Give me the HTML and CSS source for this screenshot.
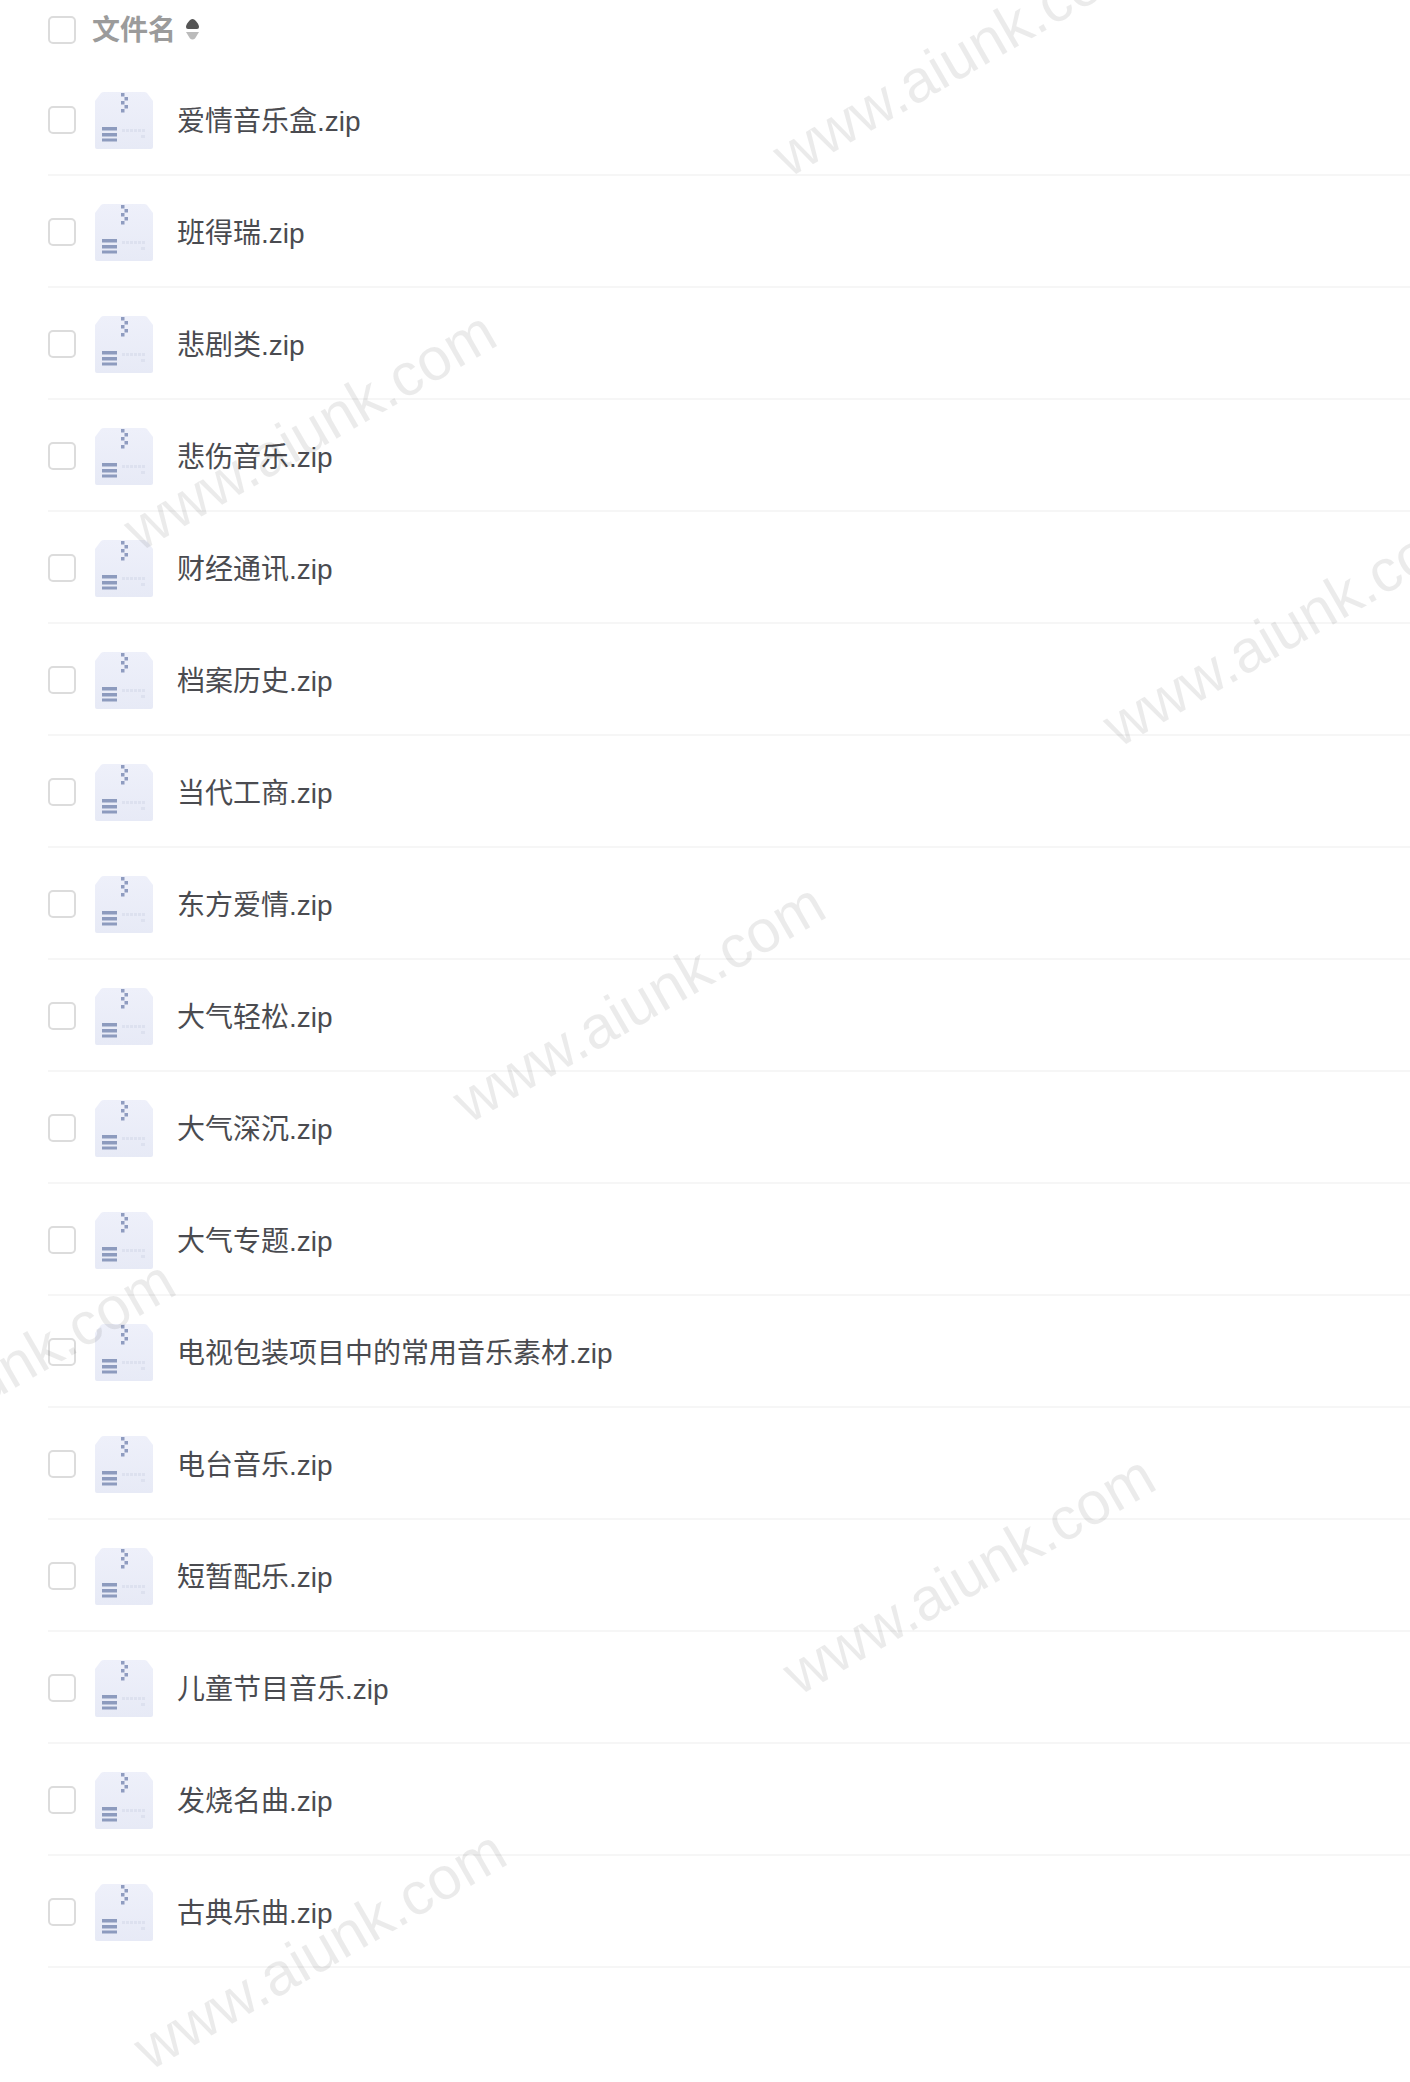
FILE: index.html
```html
<!DOCTYPE html>
<html lang="zh-CN">
<head>
    <meta charset="UTF-8">
    <title>文件列表</title>
    <link rel="stylesheet" href="styles.css">
</head>
<body>

<svg class="defs" width="0" height="0">
    <defs>
        <linearGradient id="zipfill" x1="0" y1="0" x2="0" y2="1">
            <stop offset="0" stop-color="#eef0fa"/>
            <stop offset="1" stop-color="#e7eaf6"/>
        </linearGradient>
    </defs>
    <symbol id="zip" viewBox="0 0 58 57">
        <path d="M0 9 L6 1 Q7 0 9 0 H49 Q51 0 52 1 L58 9 V55 Q58 57 56 57 H2 Q0 57 0 55 Z" fill="url(#zipfill)"/>
        <path d="M26 1h3.500v3.500h-3.500zM29.500 5h3.500v3.500h-3.500zM26 9h3.500v3.500h-3.500zM29.500 13h3.500v3.500h-3.500zM26 17h3.500v3.500h-3.500z" fill="#8f9cc0"/>
        <path d="M7 35h15v3.500h-15zM7 41h15v3.500h-15zM7 46.500h15v3h-15z" fill="#8d9bbe"/>
        <path d="M27 37h3v3h-3zM31 37h3v3h-3zM35 37h3v3h-3zM39 37h3v3h-3zM43 37h3v3h-3zM47 37h3v3h-3zM46 43h4v3h-4z" fill="#dde1ef"/>
    </symbol>
</svg>

<div class="list-head">
    <span class="check"></span>
    <span class="head-name">文件名</span>
    <svg class="sort" width="13" height="21" viewBox="0 0 13 21">
        <path d="M6.500 0 C9 0 13 5 13 8 Q13 10 11 10 H2 Q0 10 0 8 C0 5 4 0 6.500 0 Z" fill="#555"/>
        <path d="M0 13 H13 L9 19.500 Q6.500 21.500 4 19.500 Z" fill="#bbb"/>
    </svg>
</div>

<ul class="file-list">
    <li class="file"><span class="check"></span><svg class="zip"><use href="#zip"/></svg><span class="name">爱情音乐盒.zip</span></li>
    <li class="file"><span class="check"></span><svg class="zip"><use href="#zip"/></svg><span class="name">班得瑞.zip</span></li>
    <li class="file"><span class="check"></span><svg class="zip"><use href="#zip"/></svg><span class="name">悲剧类.zip</span></li>
    <li class="file"><span class="check"></span><svg class="zip"><use href="#zip"/></svg><span class="name">悲伤音乐.zip</span></li>
    <li class="file"><span class="check"></span><svg class="zip"><use href="#zip"/></svg><span class="name">财经通讯.zip</span></li>
    <li class="file"><span class="check"></span><svg class="zip"><use href="#zip"/></svg><span class="name">档案历史.zip</span></li>
    <li class="file"><span class="check"></span><svg class="zip"><use href="#zip"/></svg><span class="name">当代工商.zip</span></li>
    <li class="file"><span class="check"></span><svg class="zip"><use href="#zip"/></svg><span class="name">东方爱情.zip</span></li>
    <li class="file"><span class="check"></span><svg class="zip"><use href="#zip"/></svg><span class="name">大气轻松.zip</span></li>
    <li class="file"><span class="check"></span><svg class="zip"><use href="#zip"/></svg><span class="name">大气深沉.zip</span></li>
    <li class="file"><span class="check"></span><svg class="zip"><use href="#zip"/></svg><span class="name">大气专题.zip</span></li>
    <li class="file"><span class="check"></span><svg class="zip"><use href="#zip"/></svg><span class="name">电视包装项目中的常用音乐素材.zip</span></li>
    <li class="file"><span class="check"></span><svg class="zip"><use href="#zip"/></svg><span class="name">电台音乐.zip</span></li>
    <li class="file"><span class="check"></span><svg class="zip"><use href="#zip"/></svg><span class="name">短暂配乐.zip</span></li>
    <li class="file"><span class="check"></span><svg class="zip"><use href="#zip"/></svg><span class="name">儿童节目音乐.zip</span></li>
    <li class="file"><span class="check"></span><svg class="zip"><use href="#zip"/></svg><span class="name">发烧名曲.zip</span></li>
    <li class="file"><span class="check"></span><svg class="zip"><use href="#zip"/></svg><span class="name">古典乐曲.zip</span></li>
</ul>

<!-- watermark sits over the list -->
<div class="marks">
    <span class="mark m1">www.aiunk.com</span>
    <span class="mark m2">www.aiunk.com</span>
    <span class="mark m3">www.aiunk.com</span>
    <span class="mark m4">www.aiunk.com</span>
    <span class="mark m5">www.aiunk.com</span>
    <span class="mark m6">www.aiunk.com</span>
    <span class="mark m7">www.aiunk.com</span>
</div>

</body>
</html>
```
FILE: styles.css
```css
html, body {
    height: 100%;
}

body {
    margin: 0;
    position: relative;
    overflow: hidden;
    background-color: #fff;
    font-family: "Liberation Sans", "Noto Sans CJK SC", sans-serif;
}

.defs {
    position: absolute;
}

.check {
    flex: none;
    width: 28px;
    height: 28px;
    box-sizing: border-box;
    border: 2px solid #dcdcdc;
    border-radius: 5px;
}

.list-head {
    height: 48px;
    padding: 16px 0 0 48px;
    display: flex;
    align-items: flex-start;
}

.head-name {
    margin: 1px 0 0 16px;
    font-size: 28px;
    line-height: 28px;
    font-weight: 700;
    color: #9b9b9b;
}

.sort {
    margin: 3px 0 0 10px;
}

.file-list {
    margin: 0 0 0 48px;
    padding: 0;
    list-style: none;
}

.file {
    height: 112px;
    box-sizing: border-box;
    padding-top: 2px;
    display: flex;
    align-items: center;
    border-bottom: 2px solid #f6f6f6;
}

.zip {
    flex: none;
    width: 58px;
    height: 57px;
    margin-left: 19px;
}

.name {
    margin: 0 0 3px 24px;
    font-size: 28px;
    color: #4a4b50;
    white-space: nowrap;
}

.marks {
    position: absolute;
    top: 0;
    left: 0;
    width: 100%;
    height: 100%;
    pointer-events: none;
}

.mark {
    position: absolute;
    width: 440px;
    margin: -35px 0 0 -220px;
    font-family: "Liberation Sans", sans-serif;
    font-size: 60px;
    line-height: 70px;
    text-align: center;
    white-space: nowrap;
    color: rgba(0, 0, 0, 0.08);
    transform: rotate(-30deg);
}

.m1 { left: 959px; top: 57px; }
.m2 { left: 310px; top: 431px; }
.m3 { left: 1289px; top: 627px; }
.m4 { left: 639px; top: 1003px; }
.m5 { left: -11px; top: 1380px; }
.m6 { left: 969px; top: 1575px; }
.m7 { left: 320px; top: 1950px; }
```
